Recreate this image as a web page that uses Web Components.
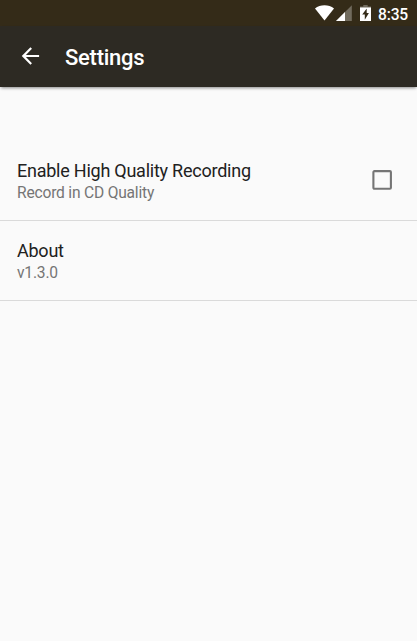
<!DOCTYPE html>
<html lang="en">
<head>
<meta charset="utf-8">
<title>Settings</title>
<style>
  html, body {
    margin: 0;
    height: 100%;
    overflow: hidden;
  }

  body {
    background: #fafafa;
    font-family: Roboto, sans-serif;
  }
</style>
</head>
<body>
<settings-screen>
  <status-bar slot="status">8:35</status-bar>
  <app-bar slot="bar">Settings</app-bar>
  <preference-item>
    Enable High Quality Recording
    <span slot="summary">Record in CD Quality</span>
    <check-box slot="widget"></check-box>
  </preference-item>
  <preference-item>
    About
    <span slot="summary">v1.3.0</span>
  </preference-item>
</settings-screen>

<script>
/**
 * Base class, attaches the shadow root and fills it from the template
 */
class BaseElement extends HTMLElement {
  constructor() {
    super();
    const template = document.createElement("template");
    template.innerHTML = this.constructor.markup;
    this.attachShadow({ mode: "open" });
    this.shadowRoot.appendChild(template.content.cloneNode(true));
  }
}

/**
 * StatusBar class, system icons and the clock
 */
class StatusBar extends BaseElement {
  static get markup() {
    return `
<style>
  :host {
    display: flex;
    align-items: center;
    justify-content: flex-end;
    box-sizing: border-box;
    height: 26px;
    padding-right: 9px;
    background: #342b18;
    color: #fff;
    font-size: 15.6px;
    font-weight: 500;
    letter-spacing: -0.2px;
    line-height: 26px;
  }

  svg {
    display: block;
    fill: #fff;
  }

  .wifi {
    margin-right: 2px;
  }

  .signal {
    margin-right: 8px;
  }

  .battery {
    margin-right: 7px;
  }

  .time {
    padding-top: 3px;
  }
</style>
<svg class="wifi" width="19" height="16" viewBox="0 0 19 16">
  <path d="M9.5 15.6 0 3.4C2.6 1.3 6 .2 9.5 .2s6.9 1.1 9.5 3.2z"/>
</svg>
<svg class="signal" width="16" height="16" viewBox="0 0 16 16">
  <path d="M0 16 15.8 .2V16z" fill-opacity=".3"/>
  <path d="M0 16 9 7V16z"/>
</svg>
<svg class="battery" width="11" height="16" viewBox="0 0 11 16">
  <path d="M3.3 0h4.4v1.6H11V4H0V1.6h3.3z" fill-opacity=".3"/>
  <path fill-rule="evenodd" d="M0 2.5h11V16H0zM6.7 3.4 2.2 9.6H4.8V14.8L8.9 8H6.7z"/>
</svg>
<div class="time"><slot></slot></div>
`;
  }
}

/**
 * AppBar class, back arrow and the screen title
 */
class AppBar extends BaseElement {
  static get markup() {
    return `
<style>
  :host {
    display: flex;
    align-items: center;
    box-sizing: border-box;
    height: 61px;
    padding-left: 17px;
    background: #2d2a23;
    box-shadow: 0 2px 3px -1px rgba(0, 0, 0, .45);
    color: #fff;
    font-size: 22px;
    font-weight: 500;
    letter-spacing: -0.25px;
    line-height: 26px;
  }

  svg {
    display: block;
    margin-right: 22px;
    padding-bottom: 1px;
    fill: #fff;
  }

  .title {
    padding-top: 2px;
  }
</style>
<svg width="26" height="26" viewBox="-0.4 0 24 24">
  <path d="M20 11H7.83l5.59-5.59L12 4l-8 8 8 8 1.41-1.41L7.83 13H20v-2z"/>
</svg>
<div class="title"><slot></slot></div>
`;
  }
}

/**
 * CheckBox class, unchecked material checkbox
 */
class CheckBox extends BaseElement {
  static get markup() {
    return `
<style>
  :host {
    display: block;
    padding-bottom: 1px;
  }

  svg {
    display: block;
  }
</style>
<svg width="20" height="20" viewBox="0 0 20 20">
  <rect x="1.4" y="1.1" width="17.5" height="17.7" rx="1" fill="none" stroke="#757575" stroke-width="2.1"/>
</svg>
`;
  }
}

/**
 * PreferenceItem class, title with a summary and an optional widget
 */
class PreferenceItem extends BaseElement {
  static get markup() {
    return `
<style>
  :host {
    display: flex;
    align-items: center;
    justify-content: space-between;
    box-sizing: border-box;
    height: 80px;
    padding: 0 25px 0 17px;
    border-bottom: 1px solid #dadada;
  }

  .text {
    padding-top: 2px;
  }

  .title {
    color: #212121;
    font-size: 18px;
    letter-spacing: -0.24px;
    line-height: 22px;
  }

  .summary {
    color: #757575;
    font-size: 15.6px;
    letter-spacing: -0.2px;
    line-height: 22px;
  }
</style>
<div class="text">
  <div class="title"><slot></slot></div>
  <div class="summary"><slot name="summary"></slot></div>
</div>
<slot name="widget"></slot>
`;
  }
}

/**
 * SettingsScreen class, stacks the bars above the preference list
 */
class SettingsScreen extends BaseElement {
  static get markup() {
    return `
<style>
  :host {
    display: flex;
    flex-direction: column;
    height: 100%;
  }

  .list {
    flex: 1;
    padding-top: 54px;
  }
</style>
<slot name="status"></slot>
<slot name="bar"></slot>
<div class="list"><slot></slot></div>
`;
  }
}

window.customElements.define("status-bar", StatusBar);
window.customElements.define("app-bar", AppBar);
window.customElements.define("check-box", CheckBox);
window.customElements.define("preference-item", PreferenceItem);
window.customElements.define("settings-screen", SettingsScreen);
</script>
</body>
</html>
